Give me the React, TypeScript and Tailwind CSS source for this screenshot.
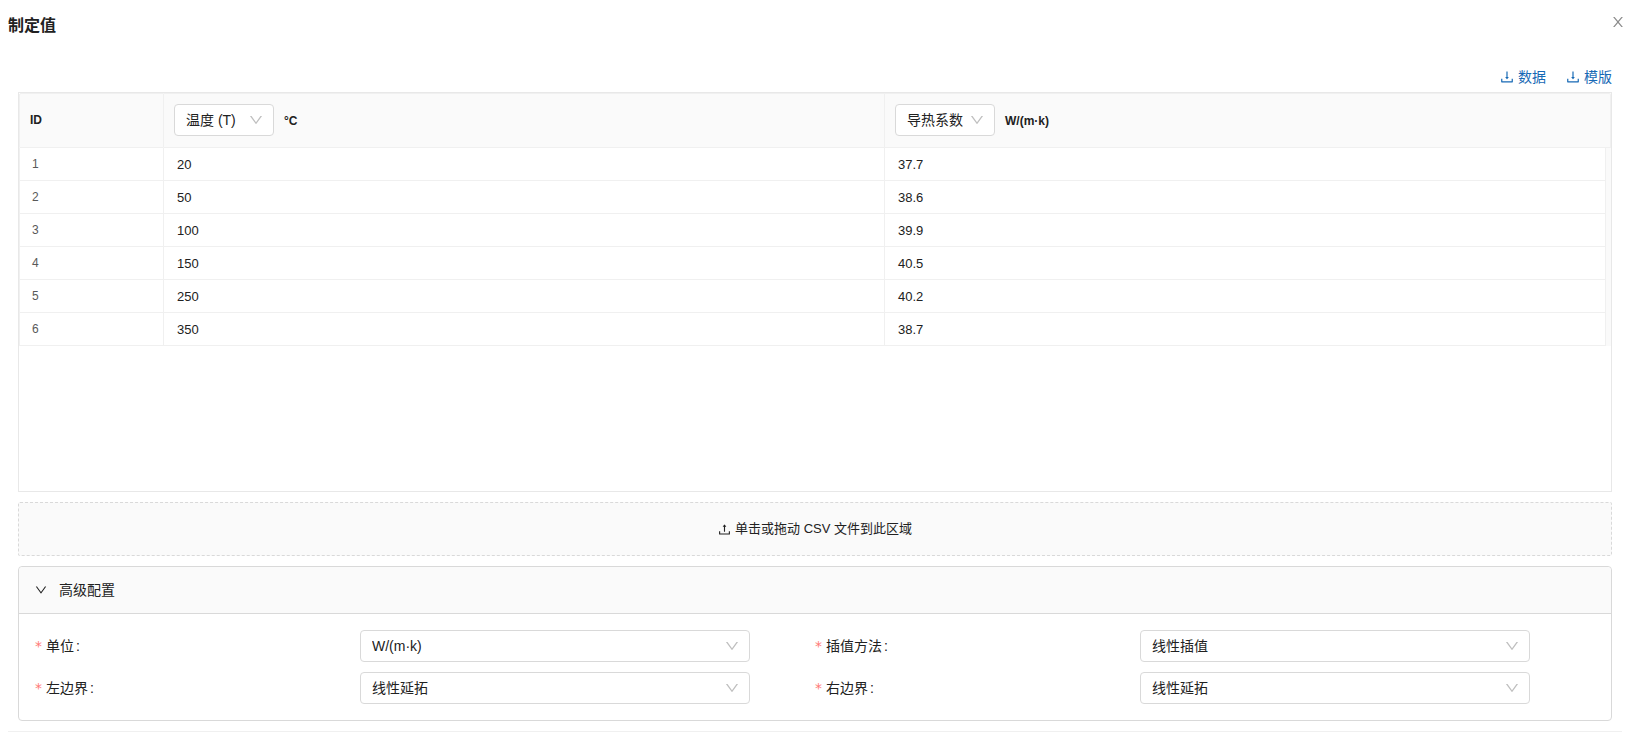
import React, { useState } from "react";

interface IconProps {
  d: string;
  className?: string;
}

interface SelectProps {
  id?: string;
  label?: string;
  options: string[];
  className?: string;
}

const DOWN =
  "M884 256h-75c-5.1 0-9.9 2.5-12.9 6.6L512 654.2 227.9 262.6c-3-4.1-7.8-6.6-12.9-6.6h-75c-6.5 0-10.3 7.4-6.5 12.7l352.6 486.1c12.8 17.6 39 17.6 51.7 0l352.6-486.1c3.9-5.3.1-12.7-6.4-12.7z";
const CLOSE =
  "M563.8 512l262.5-312.9c4.4-5.2.7-13.1-6.1-13.1h-79.8c-4.7 0-9.2 2.1-12.3 5.7L511.6 449.8 295.1 191.7c-3-3.6-7.5-5.7-12.3-5.7H203c-6.8 0-10.5 7.9-6.1 13.1L459.4 512 196.9 824.9A7.95 7.95 0 0 0 203 838h79.8c4.7 0 9.2-2.1 12.3-5.7l216.5-258.1 216.5 258.1c3 3.6 7.5 5.7 12.3 5.7h79.8c6.8 0 10.5-7.9 6.1-13.1L563.8 512z";
const TRAY =
  "M878 626h-60c-4.4 0-8 3.6-8 8v154H214V634c0-4.4-3.6-8-8-8h-60c-4.4 0-8 3.6-8 8v198c0 17.7 14.3 32 32 32h684c17.7 0 32-14.3 32-32V634c0-4.4-3.6-8-8-8z";
const DOWNLOAD =
  "M505.7 661a8 8 0 0 0 12.6 0l112-141.7c4.1-5.2.4-12.9-6.3-12.9h-74.1V168c0-4.4-3.6-8-8-8h-60c-4.4 0-8 3.6-8 8v338.3H400c-6.7 0-10.4 7.7-6.3 12.9l112 141.8z" + TRAY;
const UPLOAD =
  "M400 317.7h73.9V656c0 4.4 3.6 8 8 8h60c4.4 0 8-3.6 8-8V317.7H624c6.7 0 10.4-7.7 6.3-12.9L518.3 163a8 8 0 0 0-12.6 0l-112 141.7c-4.1 5.3-.4 13 6.3 13z" + TRAY;

const rows = [
  { id: 1, temperature: "20", value: "37.7" },
  { id: 2, temperature: "50", value: "38.6" },
  { id: 3, temperature: "100", value: "39.9" },
  { id: 4, temperature: "150", value: "40.5" },
  { id: 5, temperature: "250", value: "40.2" },
  { id: 6, temperature: "350", value: "38.7" },
];

const fields = [
  { id: "unit", label: "单位", options: ["W/(m·k)"] },
  { id: "interpolation", label: "插值方法", options: ["线性插值"] },
  { id: "left", label: "左边界", options: ["线性延拓"] },
  { id: "right", label: "右边界", options: ["线性延拓"] },
];

function Icon({ d, className }: IconProps) {
  return (
    <svg viewBox="64 64 896 896" fill="currentColor" className={className} aria-hidden="true">
      <path d={d} />
    </svg>
  );
}

function Select({ id, label, options, className }: SelectProps) {
  return (
    <div className={`relative ${className || ""}`}>
      <select
        id={id}
        aria-label={label}
        className="block w-full h-8 appearance-none rounded-[4px] border border-[#d9d9d9] bg-white pl-[11px] pr-6 text-sm font-normal text-[#212121]"
      >
        {options.map((option) => (
          <option key={option}>{option}</option>
        ))}
      </select>
      <Icon d={DOWN} className="pointer-events-none absolute right-[11px] top-[9px] size-3.5 text-[#bfbfbf]" />
    </div>
  );
}

function DataTable() {
  return (
    <div className="h-[400px] overflow-hidden border border-[#e8e8e8]">
      <table className="w-full table-fixed border-separate border-spacing-0 text-left">
        <colgroup>
          <col className="w-[145px]" />
          <col />
          <col />
          <col className="w-[5px]" />
        </colgroup>
        <thead>
          <tr className="h-[55px] bg-[#fafafa] text-xs">
            <th className="rounded-tl-[2px] border border-[#f0f0f0] px-2.5 pt-0 pb-0.5 font-bold">ID</th>
            <th className="border-y border-r border-[#f0f0f0] px-2.5 pt-0 pb-px">
              <div className="flex items-center gap-2.5">
                <Select label="自变量" options={["温度 (T)"]} className="w-[100px]" />
                <span className="pt-0.5">°C</span>
              </div>
            </th>
            <th colSpan={2} className="rounded-tr-[2px] border-y border-r border-[#f0f0f0] px-2.5 pt-0 pb-px">
              <div className="flex items-center gap-2.5">
                <Select label="因变量" options={["导热系数"]} className="w-[100px]" />
                <span className="pt-0.5">W/(m·k)</span>
              </div>
            </th>
          </tr>
        </thead>
        <tbody>
          {rows.map((row) => (
            <tr key={row.id} className="h-[33px]">
              <td className="border-x border-b border-[#f0f0f0] px-3 pt-0 pb-px text-xs text-[#595959]">{row.id}</td>
              <td className="border-r border-b border-[#f0f0f0] px-[13px] pt-px pb-0 text-[13px]">{row.temperature}</td>
              <td className="border-r border-b border-[#f0f0f0] px-[13px] pt-px pb-0 text-[13px]">{row.value}</td>
              <td className="bg-[#fafafa] p-0"></td>
            </tr>
          ))}
        </tbody>
      </table>
    </div>
  );
}

export default function App() {
  const [open, setOpen] = useState(true);

  return (
    <div className="bg-white pl-2 pr-2.5 text-[#212121] font-['Liberation_Sans','Noto_Sans_CJK_SC',sans-serif]">
      <header className="flex h-[66px] items-start justify-between">
        <h1 className="pt-3.5 text-base leading-6 font-bold">制定值</h1>
        <button type="button" aria-label="关闭" className="-mr-[3px] mt-[15px] text-[#8c8c8c]">
          <Icon d={CLOSE} className="size-3.5" />
        </button>
      </header>

      <main className="border-b border-[#f0f0f0] px-2.5 pb-2.5">
        <div className="flex h-[26px] justify-end gap-5 text-sm leading-[22px] text-[#1769b5]">
          <a href="#data" className="flex h-[22px] items-center gap-1">
            <Icon d={DOWNLOAD} className="size-3.5" />
            数据
          </a>
          <a href="#template" className="flex h-[22px] items-center gap-1">
            <Icon d={DOWNLOAD} className="size-3.5" />
            模版
          </a>
        </div>

        <DataTable />

        <button
          type="button"
          className="mt-2.5 flex h-[54px] w-full items-center justify-center gap-1 rounded-[2px] border border-dashed border-[#d9d9d9] bg-[#fafafa] text-[13px]"
        >
          <Icon d={UPLOAD} className="size-[13px]" />
          单击或拖动 CSV 文件到此区域
        </button>

        <section className="mt-2.5 rounded-[4px] border border-[#d9d9d9]">
          <button
            type="button"
            aria-expanded={open}
            onClick={() => setOpen(!open)}
            className="flex h-[47px] w-full items-center gap-3 rounded-t-[4px] border-b border-[#d9d9d9] bg-[#fafafa] px-4 text-sm"
          >
            <Icon d={DOWN} className="size-3" />
            高级配置
          </button>
          {open && (
            <div className="grid grid-cols-2 gap-y-2.5 p-4">
              {fields.map((field) => (
                <div key={field.id} className="flex items-center">
                  <label htmlFor={field.id} className="flex w-5/12 items-center text-sm">
                    <span className="mr-1 font-['DejaVu_Sans',sans-serif] text-[#ff7875]">*</span>
                    {field.label}
                    <span className="ml-0.5">:</span>
                  </label>
                  <Select id={field.id} options={field.options} className="w-1/2" />
                </div>
              ))}
            </div>
          )}
        </section>
      </main>
    </div>
  );
}
